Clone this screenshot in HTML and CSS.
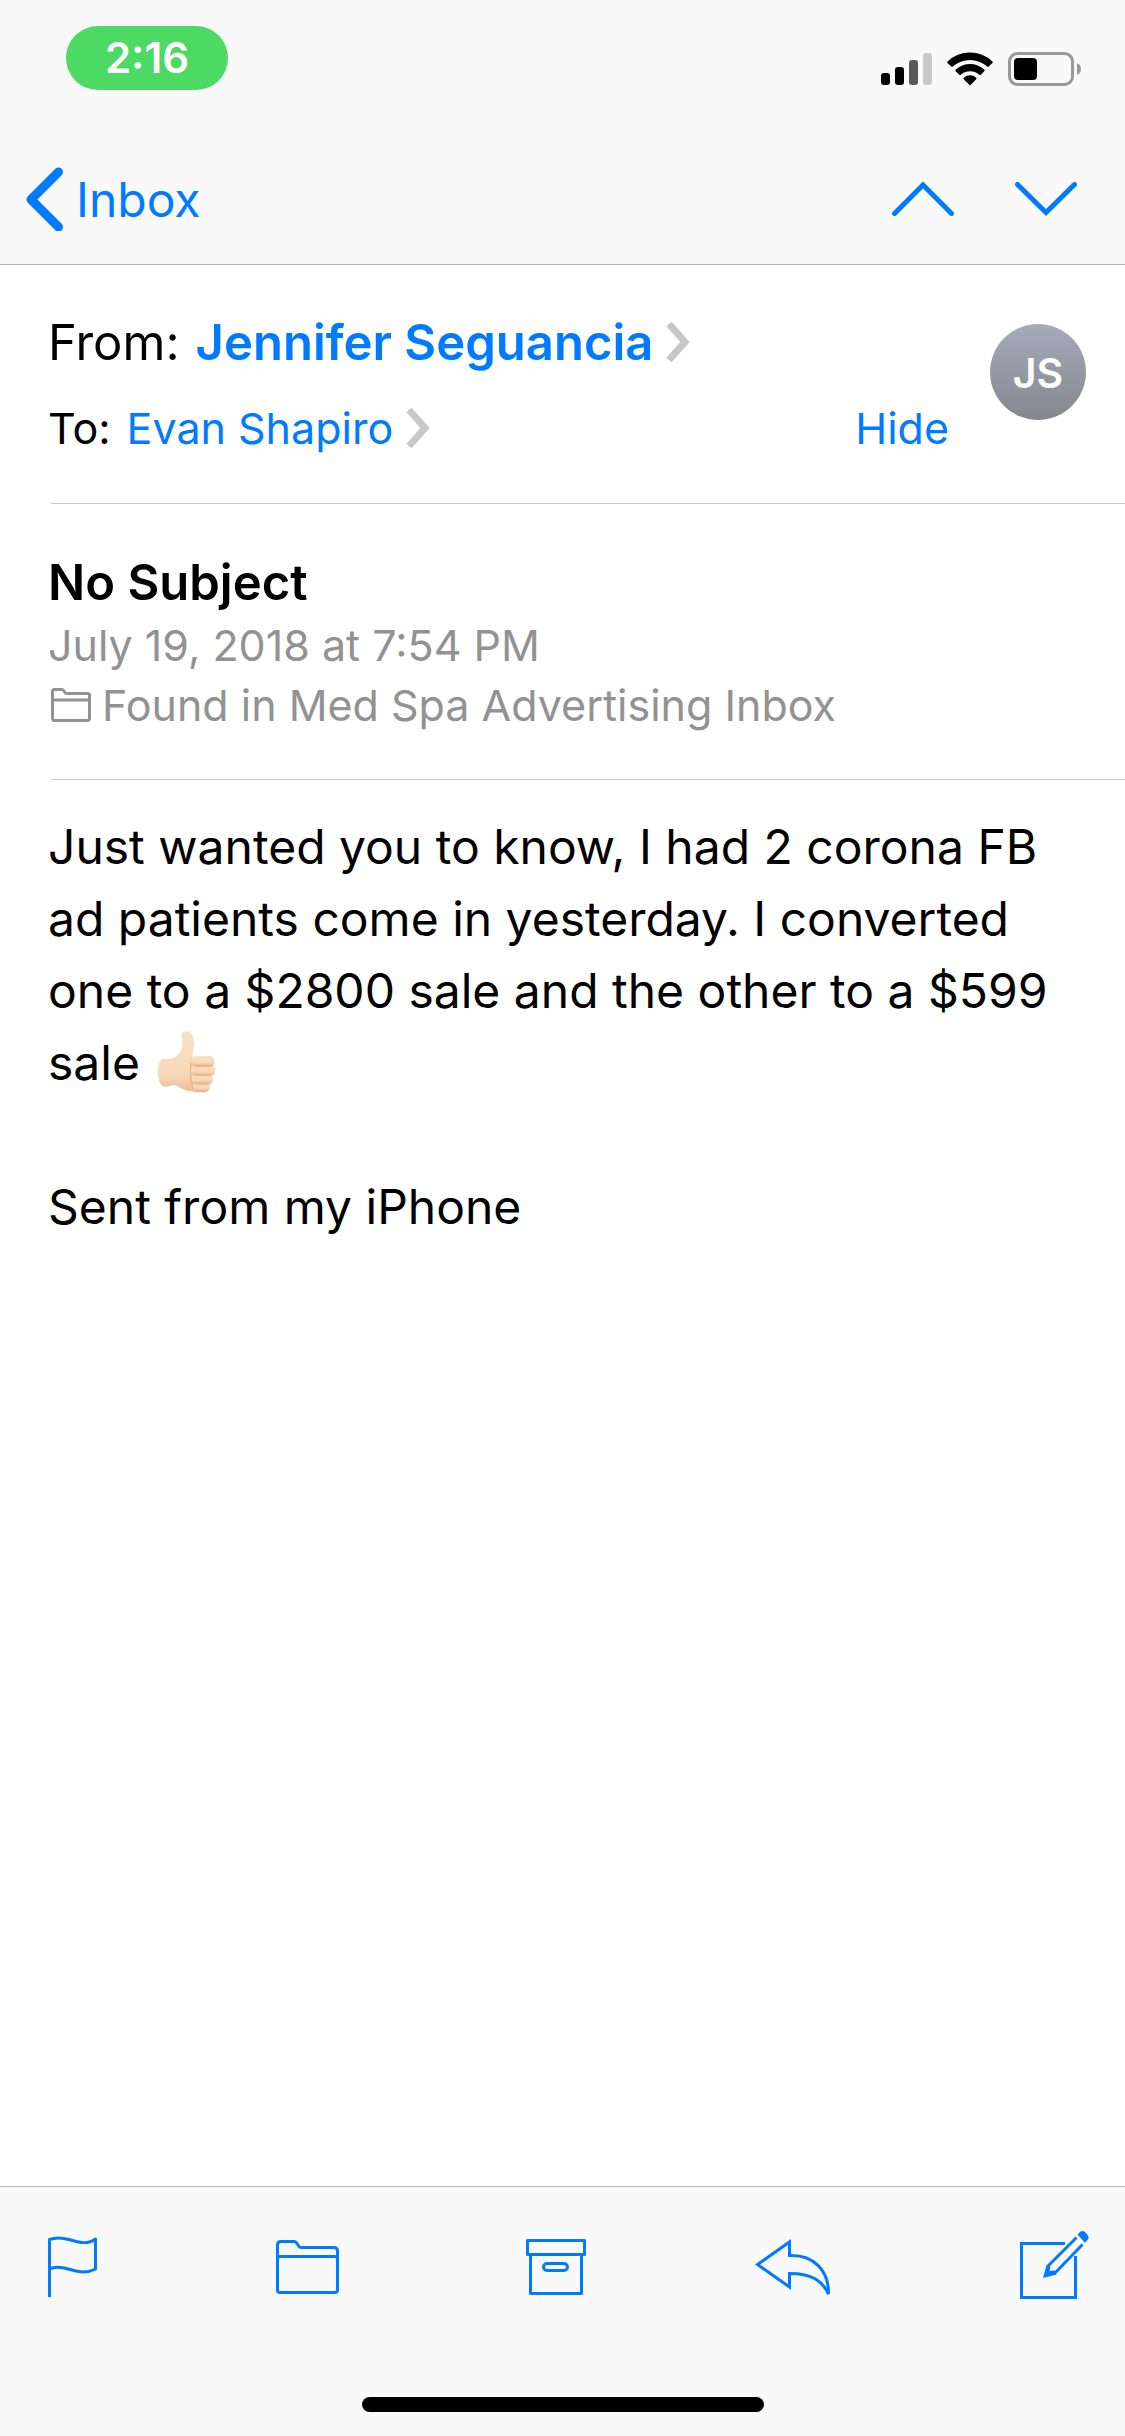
FILE: index.html
```html
<!DOCTYPE html>
<html lang="en">
<head>
<meta charset="utf-8">
<meta name="viewport" content="width=device-width, initial-scale=1">
<title>No Subject</title>
<link rel="stylesheet" href="styles.css">
</head>
<body>
<div class="app">
  <header class="top">
    <div class="status">
      <span class="clock">2:16</span>
      <div class="indicators">
        <svg width="52" height="34" viewBox="0 0 52 34" aria-label="Signal">
          <rect x="1" y="21" width="9" height="12" rx="3"/>
          <rect x="15" y="15" width="9" height="18" rx="3"/>
          <rect x="29" y="8" width="9" height="25" rx="3" fill="#585858"/>
          <rect x="43" y="1" width="9" height="32" rx="3" fill="#c8c8c8"/>
        </svg>
        <svg width="46" height="34" viewBox="0 0 46 34" aria-label="Wi-Fi">
          <path d="M0.6 9.4Q-0.3 10.2 0.6 11L4.2 14.6Q5 15.3 5.8 14.6A25.5 25.5 0 0 1 40.2 14.6Q41 15.3 41.8 14.6L45.4 11Q46.3 10.2 45.4 9.4A32.5 32.5 0 0 0 0.6 9.4Z"/>
          <path d="M8.7 17.6Q7.9 18.4 8.7 19.2L12.2 22.7Q13 23.4 13.8 22.7A14 14 0 0 1 32.2 22.7Q33 23.4 33.8 22.7L37.3 19.2Q38.1 18.4 37.3 17.6A21 21 0 0 0 8.7 17.6Z"/>
          <path d="M16.7 25.7Q16 26.5 16.7 27.2L22.2 32.8Q23 33.5 23.8 32.8L29.3 27.2Q30 26.5 29.3 25.7A9.4 9.4 0 0 0 16.7 25.7Z"/>
        </svg>
        <svg width="74" height="34" viewBox="0 0 74 34" aria-label="Battery">
          <rect x="1.5" y="1.5" width="63" height="31" rx="8" fill="none" stroke="#999" stroke-width="3"/>
          <rect x="6" y="6" width="23" height="22" rx="4"/>
          <path d="M69 11Q73 13 73 17T69 23Z" fill="#999"/>
        </svg>
      </div>
    </div>
    <nav class="nav">
      <a class="back" href="#inbox">
        <svg width="37" height="64" viewBox="0 0 37 64" aria-hidden="true"><path d="M32.5 5 5 32.500 32.500 60" class="stroke bold"/></svg>
        <span>Inbox</span>
      </a>
      <div class="steps">
        <button type="button" aria-label="Previous message">
          <svg width="62" height="34" viewBox="0 0 62 34"><path d="M2.500 31.500 31 3 59.500 31.500" class="stroke mid"/></svg>
        </button>
        <button type="button" aria-label="Next message">
          <svg width="62" height="34" viewBox="0 0 62 34"><path d="M2.500 2.500 31 30.500 59.500 2.500" class="stroke mid"/></svg>
        </button>
      </div>
    </nav>
  </header>

  <main class="message">
    <section class="people">
      <div class="lines">
        <div class="line from">
          <span>From:</span>
          <a href="#sender"><b>Jennifer Seguancia</b>
            <svg width="26" height="40" viewBox="0 0 26 40" aria-hidden="true"><path d="M4 2 20 20 4 38" class="more"/></svg></a>
        </div>
        <div class="line to">
          <span>To:</span>
          <a href="#recipient">Evan Shapiro
            <svg width="26" height="40" viewBox="0 0 26 40" aria-hidden="true"><path d="M4 2 20 20 4 38" class="more"/></svg></a>
          <button class="hide" type="button">Hide</button>
        </div>
      </div>
      <span class="avatar">JS</span>
    </section>

    <section class="subject">
      <h1>No Subject</h1>
      <p>July 19, 2018 at 7:54 PM</p>
      <p class="found">
        <svg width="40" height="34" viewBox="0 0 40 34" aria-hidden="true"><path d="M1.500 30V3.500Q1.500 1.500 3.500 1.500H10.500Q12 1.500 13 3L14 4.500Q14.500 5.500 16 5.500H36.500Q38.500 5.500 38.500 7.500V30Q38.500 32.500 36.500 32.500H3.500Q1.500 32.500 1.500 30ZM1.500 12H38.500" fill="none" stroke="currentColor" stroke-width="3"/></svg>
        <span>Found in Med Spa Advertising Inbox</span>
      </p>
    </section>

    <article class="body">
      <p>Just wanted you to know, I had 2 corona FB ad patients come in yesterday. I converted one to a $2800 sale and the other to a $599 sale
        <svg class="thumb" width="60" height="62" viewBox="0 0 60 62" role="img" aria-label="thumbs up">
          <defs>
            <linearGradient id="skin" x1="0" y1="0" x2="0" y2="1"><stop offset="0" stop-color="#f9dfc3"/><stop offset=".7" stop-color="#f8d9b8"/><stop offset="1" stop-color="#eebb98"/></linearGradient>
            <linearGradient id="finger" x1="0" y1="0" x2="0" y2="1"><stop offset="0" stop-color="#fbe0c4"/><stop offset=".6" stop-color="#f9d6b5"/><stop offset="1" stop-color="#e6aa86"/></linearGradient>
          </defs>
          <path d="M4 28.500C8 27 14 29 18 26.500C23 23 26 18 25.500 12C25 7 23 2 27 .8C32 -.5 36 3 37 9C38 16 35 20 35.500 26L50 27V60C42 63 31 60 25 58C21 56 19 53 15 54.500C10 56 6 57 3.500 53C0 47 0 33 4 28.500Z" fill="url(#skin)"/>
          <path d="M35 27C33 37 33 48 36 58" fill="none" stroke="#e5b48e" stroke-width="1.500"/>
          <rect x="36" y="51" width="17" height="10" rx="5" fill="url(#finger)"/>
          <rect x="35" y="43" width="21" height="10.500" rx="5" fill="url(#finger)"/>
          <rect x="34" y="34" width="24" height="11" rx="5" fill="url(#finger)"/>
          <rect x="34" y="25" width="23.500" height="11" rx="5" fill="url(#finger)"/>
        </svg></p>
      <p>Sent from my iPhone</p>
    </article>
  </main>

  <footer class="bottom">
    <div class="tools">
      <button type="button" aria-label="Flag">
        <svg width="55" height="72" viewBox="0 0 55 72"><path d="M1.500 68V10.500C8 8 14 8.500 21 10.500C32 14 40 15.500 47.500 10V40C40 44 31 43.500 22 40.500C14 38 7 37 1.500 40" class="stroke thin"/></svg>
      </button>
      <button type="button" aria-label="Move to folder">
        <svg width="76" height="72" viewBox="0 0 76 72"><path d="M5.500 61V16Q5.500 12.500 9 12.500H22Q24 12.500 25 14.500L27 17.500Q27.500 18.500 29.500 18.500H62Q65.500 18.500 65.500 22V61Q65.500 63.500 63 63.500H8Q5.500 63.500 5.500 61ZM5.500 30Q5.500 27.500 8 27.500H63Q65.500 27.500 65.500 30" class="stroke thin"/></svg>
      </button>
      <button type="button" aria-label="Archive">
        <svg width="69" height="72" viewBox="0 0 69 72"><path d="M10.500 11.500H67.500V25.500H10.500ZM13.500 25.500V64.500H64.500V25.500" class="stroke thin"/><rect x="26.500" y="34.500" width="24" height="7" rx="3.500" class="stroke thin"/></svg>
      </button>
      <button type="button" aria-label="Reply">
        <svg width="87" height="72" viewBox="0 0 87 72"><path d="M2.500 35.500 34.500 13V26.500C58 25.500 74 41 73.500 65C67 51 56 44.500 34.500 44.500V58Z" class="stroke thin miter"/></svg>
      </button>
      <button type="button" aria-label="Compose">
        <svg width="78" height="72" viewBox="0 0 78 72"><path d="M54 14.500H10.500V68.500H64.500V27" class="stroke thin miter"/><path d="M33 48 37 37 65 9 71 15 43 43Z" fill="#f9f9f9"/><path d="M36.500 37.500 65.500 8.500M43.500 44.500 71.500 15.500" class="stroke thin miter"/><path d="M32 49 35.500 36 39.500 37.500 38.500 42 43.500 41.500 45.500 45.500Z" fill="#007aff"/><path d="M66.500 5.500 69 3Q72 .5 75 4L76.500 6Q79 9 76 11.500L74 13.800Z" fill="#007aff"/></svg>
      </button>
    </div>
    <div class="home-bar"></div>
  </footer>
</div>
</body>
</html>
```
FILE: styles.css
```css
* {
  box-sizing: border-box;
}

body {
  margin: 0;
  background: #fff;
  color: #000;
  font-family: Inter, "Liberation Sans", sans-serif;
  font-size: 48px;
}

h1,
p {
  margin: 0;
}

svg {
  display: block;
  flex: none;
}

a {
  color: #007aff;
  text-decoration: none;
}

button {
  padding: 0;
  border: 0;
  background: none;
  color: #007aff;
  font: inherit;
}

.app {
  display: flex;
  flex-direction: column;
  min-height: 100vh;
}

.stroke {
  fill: none;
  stroke: #007aff;
  stroke-linecap: round;
  stroke-linejoin: round;
}

.thin {
  stroke-width: 3px;
  stroke-linecap: butt;
}

.miter {
  stroke-linejoin: miter;
}

.mid {
  stroke-width: 5px;
  stroke-linejoin: miter;
}

.bold {
  stroke-width: 9px;
}

.more {
  fill: none;
  stroke: #c7c7c7;
  stroke-width: 7px;
}

/* Status bar and navigation */
.top {
  border-bottom: 1px solid #b2b2b2;
  background: #f9f9f9;
}

.status {
  display: flex;
  justify-content: space-between;
  padding: 26px 43px 0 66px;
}

.clock {
  width: 162px;
  height: 64px;
  border-radius: 32px;
  background: #4cd964;
  color: #fff;
  font-size: 42px;
  font-weight: 600;
  line-height: 64px;
  text-align: center;
}

.indicators {
  display: flex;
  gap: 15px;
  padding-top: 26px;
}

.nav {
  display: flex;
  align-items: center;
  justify-content: space-between;
  height: 174px;
  padding: 56px 48px 12px 26px;
}

.back {
  display: flex;
  align-items: center;
  gap: 13px;
}

.steps {
  display: flex;
  gap: 61px;
}

/* Sender and recipient */
.people {
  display: flex;
  margin-left: 51px;
  padding: 47px 39px 45px 0;
  border-bottom: 1px solid #c8c7cc;
}

.lines {
  display: grid;
  flex: 1;
  gap: 26px;
  margin-left: -3px;
}

.line {
  display: flex;
  align-items: center;
  gap: 16px;
  height: 60px;
}

.line a {
  display: flex;
  align-items: center;
  gap: 12px;
}

.from {
  font-size: 49px;
}

.from b {
  font-weight: 600;
}

.to {
  font-size: 43px;
}

.hide {
  margin-left: auto;
}

.avatar {
  width: 96px;
  height: 96px;
  margin: 12px 0 0 41px;
  border-radius: 50%;
  background: linear-gradient(#a5abb9, #858790);
  color: #fff;
  font-size: 41px;
  font-weight: 600;
  line-height: 98px;
  text-align: center;
}

/* Subject, date and mailbox */
.subject {
  margin-left: 51px;
  padding: 47px 0 44px;
  border-bottom: 1px solid #c8c7cc;
  color: #929292;
  font-size: 43px;
  line-height: 60px;
}

.subject > * {
  margin-left: -3px;
}

.subject h1 {
  color: #000;
  font-size: 49px;
  font-weight: 600;
  line-height: 64px;
}

.found {
  display: flex;
  align-items: center;
  gap: 11px;
}

.found svg {
  margin-left: 3px;
}

.body {
  padding: 31px 48px;
  line-height: 72px;
}

.body p + p {
  margin-top: 72px;
}

.thumb {
  display: inline-block;
  margin-left: 4px;
  vertical-align: -13px;
}

/* Toolbar */
.message {
  flex: 1;
}

.bottom {
  border-top: 1px solid #b2b2b2;
  background: #f9f9f9;
}

.tools {
  display: flex;
  justify-content: space-between;
  padding: 42px 36px 0 48px;
}

.home-bar {
  width: 402px;
  height: 15px;
  margin: 96px auto 24px;
  border-radius: 8px;
  background: #000;
}
```
